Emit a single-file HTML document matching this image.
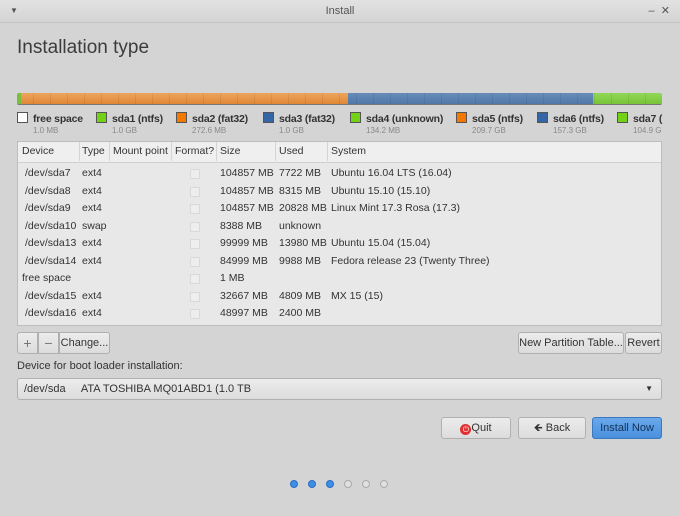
<!DOCTYPE html><html><head><style>
body{margin:0;width:680px;height:516px;background:#d4d4d4;font-family:"Liberation Sans",sans-serif;font-size:11px;color:#333;position:relative;overflow:hidden}
.a{position:absolute}
.tb{left:0;top:0;width:680px;height:22px;background:linear-gradient(#e2e2e2,#d4d4d4);border-bottom:1px solid #c4c4c4;text-align:center;line-height:22px;color:#555;font-size:11px}
.btn{position:absolute;background:linear-gradient(#ececec,#dcdcdc);border:1px solid #b0b0b0;border-radius:3px;text-align:center;line-height:20px;font-size:11px;color:#333;box-sizing:border-box}
.sw{display:inline-block;width:9px;height:9px;border:1px solid #555;vertical-align:-1px;margin-right:5px}
.lg{top:112px;font-weight:bold;color:#333;white-space:nowrap;font-size:10.5px;letter-spacing:-.2px}
.sz{top:126px;font-size:8px;color:#888}
.r{position:absolute;font-size:10.5px;color:#333;white-space:nowrap}
.cb{position:absolute;left:190px;width:8px;height:8px;border:1px solid #d8d8d8;background:#eee;border-radius:1px}
.dot{position:absolute;top:480px;width:8px;height:8px;border-radius:50%;box-sizing:border-box}
</style></head><body>
<div class="a tb">Install<span class="a" style="left:10px;top:0;font-size:8px">▼</span><span class="a" style="right:10px;top:0">–&nbsp;&nbsp;✕</span></div>
<div class="a" style="left:17px;top:37px;font-size:19px;color:#3c3c3c">Installation type</div>
<div class="a" style="left:17px;top:93px;width:645px;height:12px;border-radius:2px;overflow:hidden;border-bottom:1px solid #777;box-sizing:border-box">
<div class="a" style="left:0;top:0;width:4px;height:12px;background:#7abf3a"></div>
<div class="a" style="left:4px;top:0;width:327px;height:12px;background:linear-gradient(#f0a050,#e07b20);opacity:.9"></div>
<div class="a" style="left:331px;top:0;width:245px;height:12px;background:linear-gradient(#5c85b8,#3f6aa0);opacity:.9"></div>
<div class="a" style="left:576px;top:0;width:69px;height:12px;background:linear-gradient(#8ad84a,#6cc024);opacity:.9"></div>
<div class="a" style="left:0;top:0;width:645px;height:12px;background:repeating-linear-gradient(90deg,transparent 0 16px,rgba(0,0,0,.07) 16px 17px)"></div>
</div>
<div class="a lg" style="left:17px"><span class="sw" style="background:#fff"></span>free space</div><div class="a sz" style="left:33px">1.0 MB</div>
<div class="a lg" style="left:96px"><span class="sw" style="background:#73d216"></span>sda1 (ntfs)</div><div class="a sz" style="left:112px">1.0 GB</div>
<div class="a lg" style="left:176px"><span class="sw" style="background:#f57900"></span>sda2 (fat32)</div><div class="a sz" style="left:192px">272.6 MB</div>
<div class="a lg" style="left:263px"><span class="sw" style="background:#3465a4"></span>sda3 (fat32)</div><div class="a sz" style="left:279px">1.0 GB</div>
<div class="a lg" style="left:350px"><span class="sw" style="background:#73d216"></span>sda4 (unknown)</div><div class="a sz" style="left:366px">134.2 MB</div>
<div class="a lg" style="left:456px"><span class="sw" style="background:#f57900"></span>sda5 (ntfs)</div><div class="a sz" style="left:472px">209.7 GB</div>
<div class="a lg" style="left:537px"><span class="sw" style="background:#3465a4"></span>sda6 (ntfs)</div><div class="a sz" style="left:553px">157.3 GB</div>
<div class="a lg" style="left:617px"><span class="sw" style="background:#73d216"></span>sda7 (</div><div class="a sz" style="left:633px">104.9 G</div>
<div class="a" style="left:17px;top:141px;width:645px;height:185px;background:#e8e8e8;border:1px solid #bdbdbd;box-sizing:border-box">
<div class="a" style="left:0;top:0;width:643px;height:20px;background:#efefef;border-bottom:1px solid #d0d0d0"></div>
</div>
<div class="r" style="left:22px;top:145px">Device</div><div class="r" style="left:82px;top:145px">Type</div><div class="r" style="left:113px;top:145px">Mount point</div><div class="r" style="left:175px;top:145px">Format?</div><div class="r" style="left:220px;top:145px">Size</div><div class="r" style="left:279px;top:145px">Used</div><div class="r" style="left:331px;top:145px">System</div>
<div class="a" style="left:79px;top:142px;width:1px;height:19px;background:#d4d4d4;box-shadow:30px 0 #d4d4d4,92px 0 #d4d4d4,137px 0 #d4d4d4,196px 0 #d4d4d4,248px 0 #d4d4d4"></div>
<div id="rows"></div>
<script>
var R=[["/dev/sda7","ext4","104857 MB","7722 MB","Ubuntu 16.04 LTS (16.04)"],["/dev/sda8","ext4","104857 MB","8315 MB","Ubuntu 15.10 (15.10)"],["/dev/sda9","ext4","104857 MB","20828 MB","Linux Mint 17.3 Rosa (17.3)"],["/dev/sda10","swap","8388 MB","unknown",""],["/dev/sda13","ext4","99999 MB","13980 MB","Ubuntu 15.04 (15.04)"],["/dev/sda14","ext4","84999 MB","9988 MB","Fedora release 23 (Twenty Three)"],["free space","","1 MB","",""],["/dev/sda15","ext4","32667 MB","4809 MB","MX 15 (15)"],["/dev/sda16","ext4","48997 MB","2400 MB",""]];
var h="";R.forEach(function(r,i){var y=167+i*17.5;var x=r[0]=="free space"?22:25;
h+='<div class="r" style="left:'+x+'px;top:'+y+'px">'+r[0]+'</div><div class="r" style="left:82px;top:'+y+'px">'+r[1]+'</div><div class="cb" style="top:'+(y+2)+'px"></div><div class="r" style="left:220px;top:'+y+'px">'+r[2]+'</div><div class="r" style="left:279px;top:'+y+'px">'+r[3]+'</div><div class="r" style="left:331px;top:'+y+'px">'+r[4]+'</div>';});
document.getElementById("rows").innerHTML=h;
</script>
<div class="btn" style="left:17px;top:332px;width:21px;height:22px;border-radius:3px 0 0 3px;color:#777;font-size:14px">+</div>
<div class="btn" style="left:38px;top:332px;width:21px;height:22px;border-radius:0;color:#777;font-size:14px">−</div>
<div class="btn" style="left:59px;top:332px;width:51px;height:22px;border-radius:0 3px 3px 0">Change...</div>
<div class="btn" style="left:518px;top:332px;width:106px;height:22px">New Partition Table...</div>
<div class="btn" style="left:625px;top:332px;width:37px;height:22px">Revert</div>
<div class="a" style="left:17px;top:360px;font-size:11px">Device for boot loader installation:</div>
<div class="btn" style="left:17px;top:378px;width:645px;height:22px;text-align:left;padding-left:6px">/dev/sda &nbsp;&nbsp;&nbsp;&nbsp;ATA TOSHIBA MQ01ABD1 (1.0 TB<span class="a" style="right:8px;top:0;font-size:8px">▼</span></div>
<div class="btn" style="left:441px;top:417px;width:70px;height:22px"><span style="display:inline-block;width:11px;height:11px;border-radius:50%;background:#e03030;color:#fff;font-size:8px;line-height:11px;vertical-align:-1px">⏻</span>Quit</div>
<div class="btn" style="left:518px;top:417px;width:68px;height:22px">🡸 Back</div>
<div class="btn" style="left:592px;top:417px;width:70px;height:22px;background:linear-gradient(#6aa8ea,#4a90de);border-color:#3a78c0;color:#10335a">Install Now</div>
<div class="dot" style="left:290px;background:#3d8ee8;border:1px solid #2a70c0"></div>
<div class="dot" style="left:308px;background:#3d8ee8;border:1px solid #2a70c0"></div>
<div class="dot" style="left:326px;background:#3d8ee8;border:1px solid #2a70c0"></div>
<div class="dot" style="left:344px;background:#e0e0e0;border:1px solid #aaa"></div>
<div class="dot" style="left:362px;background:#e0e0e0;border:1px solid #aaa"></div>
<div class="dot" style="left:380px;background:#e0e0e0;border:1px solid #aaa"></div>
</body></html>
